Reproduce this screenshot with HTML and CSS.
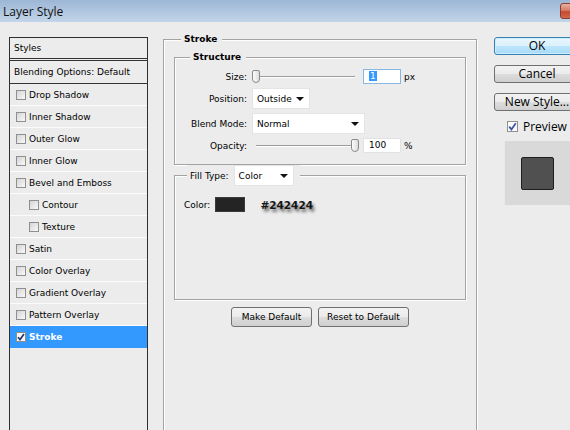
FILE: index.html
```html
<!DOCTYPE html>
<html>
<head>
<meta charset="utf-8">
<title>Layer Style</title>
<link rel="stylesheet" href="styles.css">
</head>
<body>
<div class="window">
  <div class="titlebar">
    <span class="title">Layer Style</span>
    <span class="close"></span>
  </div>
  <div class="content">
    <div class="styles-list">
      <div class="list-header">Styles</div>
      <div class="list-blend">Blending Options: Default</div>
      <div class="row"><span class="cb"></span>Drop Shadow</div>
      <div class="row"><span class="cb"></span>Inner Shadow</div>
      <div class="row"><span class="cb"></span>Outer Glow</div>
      <div class="row"><span class="cb"></span>Inner Glow</div>
      <div class="row"><span class="cb"></span>Bevel and Emboss</div>
      <div class="row sub"><span class="cb"></span>Contour</div>
      <div class="row sub"><span class="cb"></span>Texture</div>
      <div class="row"><span class="cb"></span>Satin</div>
      <div class="row"><span class="cb"></span>Color Overlay</div>
      <div class="row"><span class="cb"></span>Gradient Overlay</div>
      <div class="row"><span class="cb"></span>Pattern Overlay</div>
      <div class="row selected"><span class="cb checked"><svg width="8" height="8" viewBox="0 0 8 8"><path d="M1 4.2 L3 6.6 L7 1" fill="none" stroke="#22386e" stroke-width="1.7"/></svg></span>Stroke</div>
    </div>

    <div class="main">
      <fieldset class="group outer">
        <legend>Stroke</legend>
        <fieldset class="group structure">
          <legend>Structure</legend>
          <div class="field h15">
            <label>Size:</label>
            <div class="slider start"><span class="thumb"></span></div>
            <span class="numbox focus"><span class="sel">1</span></span>
            <span class="unit">px</span>
          </div>
          <div class="field h21">
            <label>Position:</label>
            <span class="select w-pos">Outside<i class="arrow"></i></span>
          </div>
          <div class="field h21">
            <label>Blend Mode:</label>
            <span class="select w-blend">Normal<i class="arrow"></i></span>
          </div>
          <div class="field h15">
            <label>Opacity:</label>
            <div class="slider end"><span class="thumb"></span></div>
            <span class="numbox">100</span>
            <span class="unit">%</span>
          </div>
        </fieldset>

        <fieldset class="group fill">
          <legend><span>Fill Type:</span><span class="select w-fill">Color<i class="arrow"></i></span></legend>
          <div class="fill-body">
            <div class="color-row">
              <span>Color:</span>
              <span class="swatch"></span>
              <span class="hex">#242424</span>
            </div>
          </div>
        </fieldset>

        <div class="btn-row">
          <button class="btn w-make">Make Default</button>
          <button class="btn w-reset">Reset to Default</button>
        </div>
      </fieldset>
    </div>

    <div class="side">
      <button class="side-btn ok">OK</button>
      <button class="side-btn">Cancel</button>
      <button class="side-btn last">New Style...</button>
      <div class="preview-row">
        <span class="cb big checked"><svg width="9" height="9" viewBox="0 0 9 9"><path d="M1.2 4.6 L3.4 7.4 L7.8 1.2" fill="none" stroke="#3d56a0" stroke-width="1.8"/></svg></span>
        <span>Preview</span>
      </div>
      <div class="preview-box"><div class="preview-square"></div></div>
    </div>
  </div>
</div>
</body>
</html>
```

FILE: styles.css
```css
* { box-sizing: border-box; }
html, body { margin: 0; padding: 0; }
body {
  background: #ececec;
  font-family: "DejaVu Sans", Verdana, sans-serif;
  font-size: 9px;
  color: #000;
}
.window {
  width: 570px;
  height: 430px;
  overflow: hidden;
  background: #ececec;
}

/* title bar */
.titlebar {
  height: 22px;
  display: flex;
  align-items: center;
  justify-content: space-between;
  background: linear-gradient(#9cb6d5, #c3d5e9);
}
.title {
  font-family: "Open Sans", sans-serif;
  font-size: 12px;
  padding-left: 3px;
  color: #111;
}
.close {
  flex-shrink: 0;
  width: 43px;
  height: 16px;
  margin-right: -33px;
  border: 1px solid #8a3d31;
  border-radius: 3px;
  background: linear-gradient(#e9b0a2, #d57c66 45%, #c44a30 55%, #d3664c);
}

.content {
  display: flex;
  align-items: flex-start;
  padding: 11px 0 0 9px;
}

/* styles list */
.styles-list {
  flex-shrink: 0;
  width: 139px;
  height: 400px;
  margin-top: 4px;
  border: 1px solid #2f2f2f;
}
.list-header {
  height: 23px;
  line-height: 20px;
  padding-left: 4px;
  border-bottom: 3px double #333;
}
.list-blend {
  height: 23px;
  line-height: 22px;
  padding-left: 4px;
  border-bottom: 1px solid #333;
}
.row {
  height: 22px;
  display: flex;
  align-items: center;
  padding-left: 6px;
  border-bottom: 1px solid #fcfcfc;
}
.row.sub { padding-left: 19px; }
.row.selected {
  background: #3399ff;
  color: #fff;
  font-weight: bold;
  border-bottom-color: transparent;
}
.cb {
  flex-shrink: 0;
  width: 10px;
  height: 10px;
  margin-right: 3px;
  border: 1px solid #8f8f8f;
  background: linear-gradient(135deg, #d4d4d4, #f9f9f9);
  display: flex;
  align-items: center;
  justify-content: center;
}
.cb.checked { background: #fafafa; }
.cb.big { width: 11px; height: 11px; margin-right: 5px; }

/* main group */
.main {
  flex-shrink: 0;
  margin-left: 15px;
  width: 314px;
}
fieldset.group {
  margin: 0;
  min-width: 0;
  border: 1px solid #a3a3a3;
  box-shadow: inset 1px 1px 0 #fff, 1px 1px 0 #fff;
}
fieldset.group > legend {
  padding: 0 5px 0 3px;
  font-weight: bold;
  line-height: 12px;
  background: #ececec;
}
.outer {
  width: 314px;
  height: 400px;
  padding: 6px 10px 0;
}
fieldset.outer > legend { margin-left: 7px; }

.structure {
  padding: 6px 0 11px;
  display: flex;
  flex-direction: column;
  gap: 4px;
}
fieldset.structure > legend { margin-left: 15px; }

.field {
  display: flex;
  align-items: center;
}
.h15 { height: 15px; }
.h21 { height: 21px; }
.field label {
  width: 72px;
  margin-right: 5px;
  text-align: right;
}

.slider {
  width: 107px;
  height: 15px;
  display: flex;
  align-items: center;
  background:
    linear-gradient(#9c9c9c, #9c9c9c) 4px 7px / 99px 1px no-repeat,
    linear-gradient(#fff, #fff) 4px 8px / 99px 1px no-repeat;
}
.slider.start { justify-content: flex-start; }
.slider.end { justify-content: flex-end; }
.thumb {
  width: 8px;
  height: 13px;
  border: 1px solid #8a8a8a;
  border-radius: 2px 2px 4px 4px;
  background: linear-gradient(90deg, #fdfdfd, #dcdcdc);
}
.numbox {
  width: 38px;
  height: 15px;
  margin-left: 4px;
  padding-left: 5px;
  line-height: 13px;
  background: #fff;
  border: 1px solid #e2e2e2;
}
.numbox.focus { border-color: #8ab6e2; }
.sel {
  background: #3399ff;
  color: #fff;
  padding: 0 1px;
}
.unit { margin-left: 3px; }

.select {
  display: flex;
  align-items: center;
  justify-content: space-between;
  height: 21px;
  padding: 0 5px 0 4px;
  background: #fff;
  border: 1px solid #e4e4e4;
  font-weight: normal;
}
.w-pos { width: 58px; }
.w-blend { width: 113px; }
.w-fill { width: 60px; }
.arrow {
  width: 0;
  height: 0;
  border-left: 4px solid transparent;
  border-right: 4px solid transparent;
  border-top: 4px solid #111;
}

.fill {
  margin-top: 6px;
  padding: 0;
}
fieldset.fill > legend {
  display: flex;
  align-items: center;
  gap: 5px;
  margin-left: 12px;
  padding: 0 6px 0 3px;
  font-weight: normal;
  line-height: 12px;
}
.fill-body {
  height: 113px;
  padding: 11px 0 0 9px;
}
.color-row {
  display: flex;
  align-items: center;
}
.swatch {
  width: 30px;
  height: 15px;
  margin-left: 5px;
  background: #242424;
  border: 1px solid #3a3a3a;
}
.hex {
  margin-left: 15px;
  font-size: 10.5px;
  font-weight: bold;
  color: #151515;
  text-shadow: 2px 3px 3px rgba(0, 0, 0, 0.55);
}

.btn-row {
  display: flex;
  justify-content: center;
  gap: 6px;
  margin-top: 7px;
}
.btn {
  height: 20px;
  padding: 0;
  font-family: "DejaVu Sans", Verdana, sans-serif;
  font-size: 9px;
  color: #000;
  border: 1px solid #707070;
  border-radius: 3px;
  background: linear-gradient(#f2f2f2 0%, #ebebeb 50%, #dddddd 51%, #cfcfcf 100%);
}
.w-make { width: 81px; }
.w-reset { width: 91px; }

/* right side */
.side {
  flex-shrink: 0;
  margin-left: 17px;
  margin-top: 4px;
  width: 86px;
  display: flex;
  flex-direction: column;
}
.side-btn {
  height: 18px;
  margin: 0 0 10px;
  padding: 0;
  font-family: "Open Sans", sans-serif;
  font-size: 12px;
  line-height: 14px;
  color: #000;
  border: 1px solid #707070;
  border-radius: 3px;
  background: linear-gradient(#f2f2f2 0%, #ebebeb 50%, #dddddd 51%, #cfcfcf 100%);
}
.side-btn.ok {
  border-color: #3c7fb1;
  background: linear-gradient(#eaf6fd 0%, #d9f0fc 50%, #bee6fd 51%, #a7d9f5 100%);
  box-shadow: inset 0 0 0 1px #c6f0ff;
}
.side-btn.last { margin-bottom: 0; }

.preview-row {
  display: flex;
  align-items: center;
  height: 12px;
  margin-top: 9px;
  padding-left: 13px;
  font-family: "Open Sans", sans-serif;
  font-size: 12px;
}
.preview-box {
  width: 70px;
  height: 64px;
  margin: 9px 0 0 10px;
  padding: 16px 0 0 16px;
  background: #d9d9d9;
  border-left: 1px solid #e9e9e9;
}
.preview-square {
  width: 33px;
  height: 33px;
  background: #505050;
  border: 1px solid #1e1e1e;
  border-radius: 2px;
}
```
